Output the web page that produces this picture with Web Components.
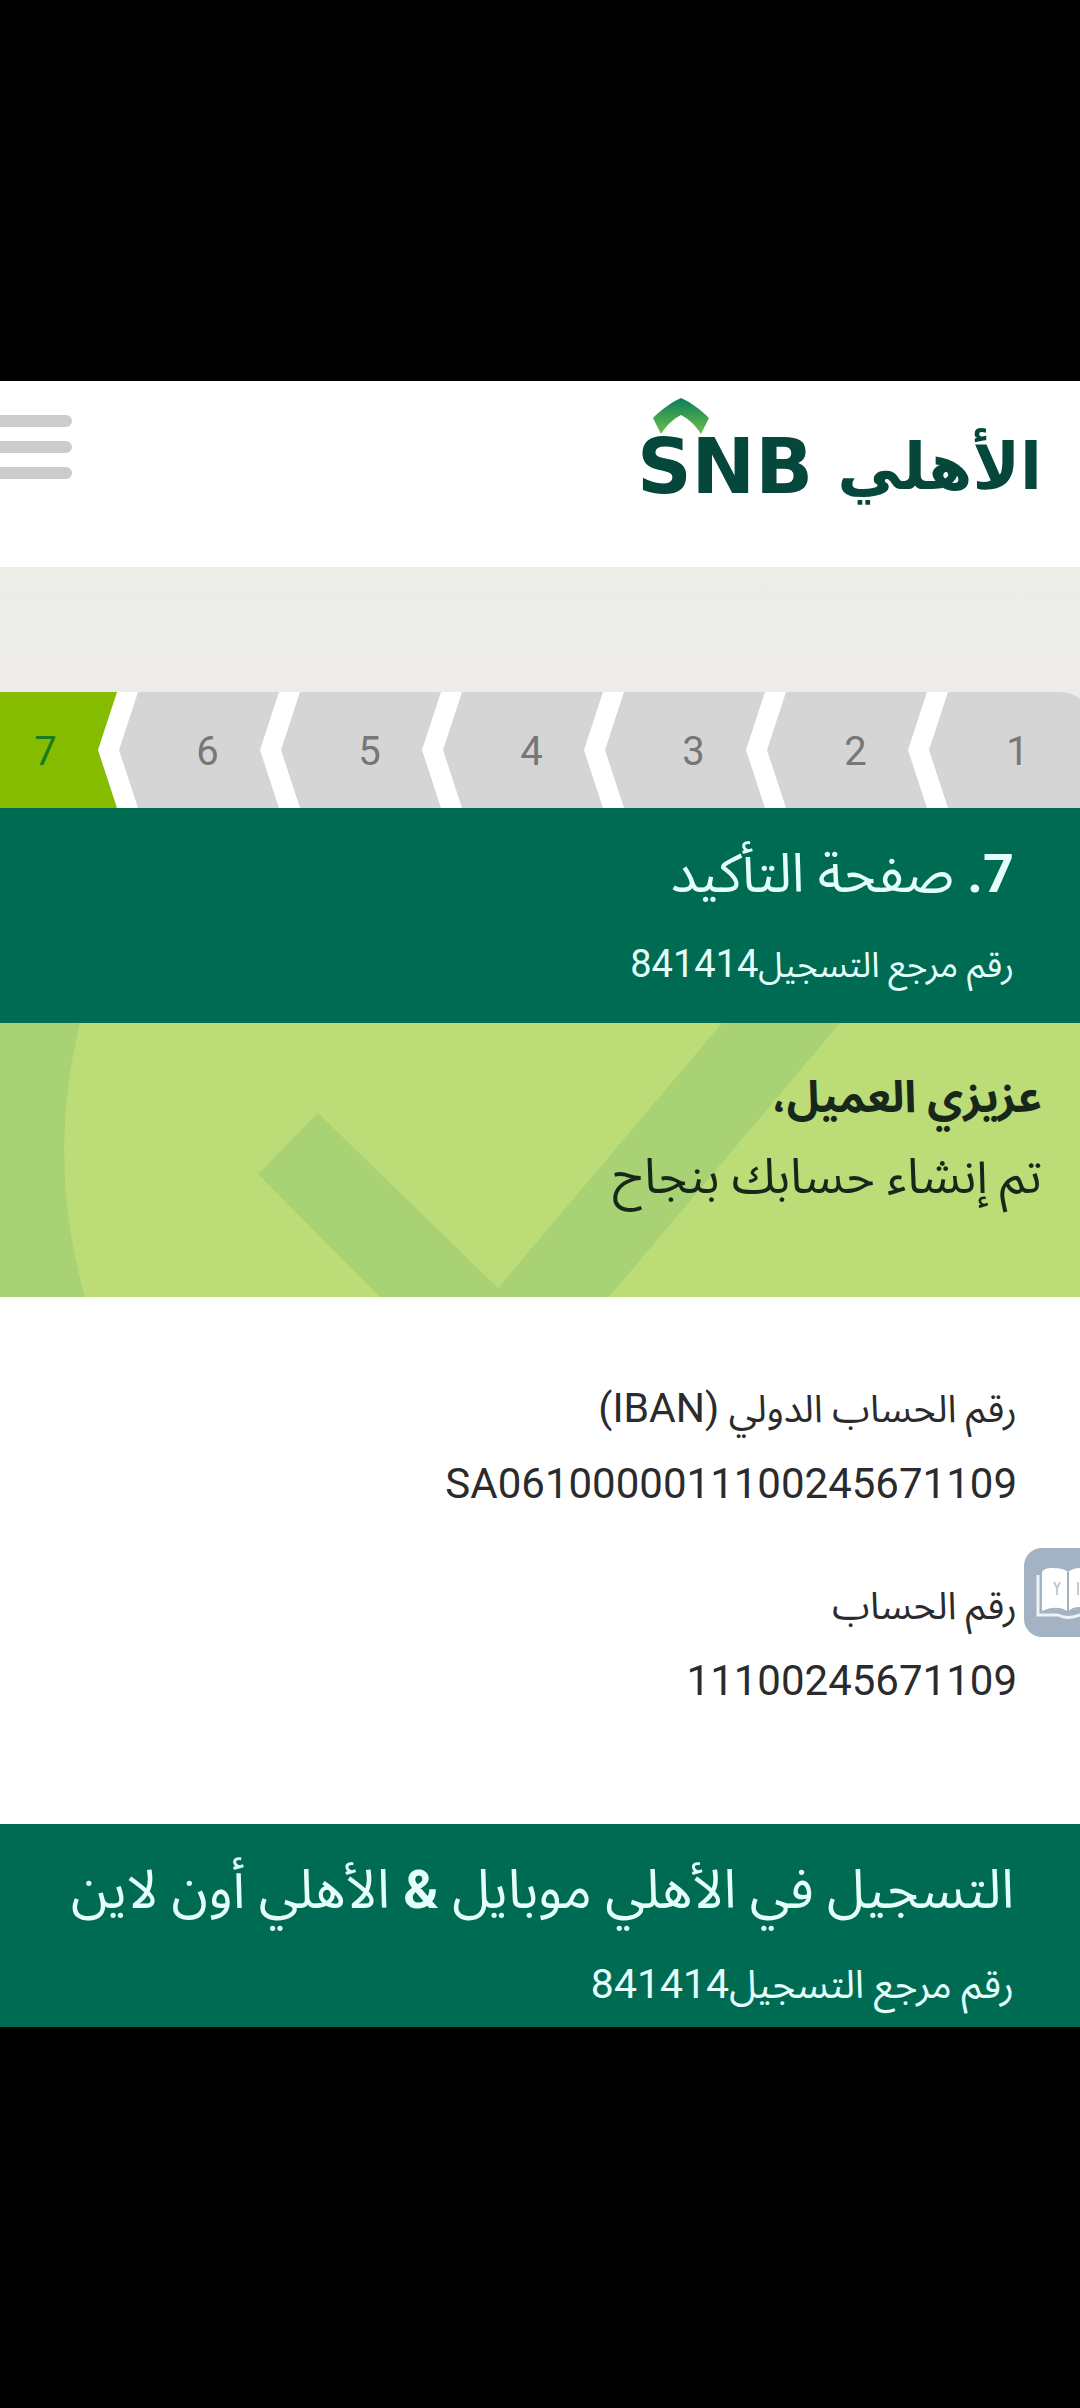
<!DOCTYPE html>
<html lang="ar" dir="rtl">
<head>
<meta charset="utf-8">
<meta name="viewport" content="width=device-width, initial-scale=1">
<title>صفحة التأكيد</title>
<style>
body{margin:0;background:#000;font-family:Roboto,"Noto Sans","Noto Sans Arabic","DejaVu Sans",sans-serif;color:#2b2b2e}
.latin{font-size:41px}
</style>
</head>
<body>
<snb-page>
  <snb-header></snb-header>
  <snb-steps count="7" current="7"></snb-steps>
  <snb-section-title><span slot="title"><b>7.</b> صفحة التأكيد</span><span slot="label">رقم مرجع التسجيل</span><span slot="number">841414</span></snb-section-title>
  <snb-banner><span slot="title">عزيزي العميل،</span><span slot="text">تم إنشاء حسابك بنجاح</span></snb-banner>
  <snb-accounts>
    <snb-field><span slot="label">رقم الحساب الدولي <span class="latin">(IBAN)</span></span><span slot="value">SA0610000011100245671109</span></snb-field>
    <snb-field><span slot="label">رقم الحساب</span><span slot="value">11100245671109</span></snb-field>
    <snb-guide slot="aside"></snb-guide>
  </snb-accounts>
  <snb-section-title class="compact"><span slot="title">التسجيل في الأهلي موبايل <b>&amp;</b> الأهلي أون لاين</span><span slot="label">رقم مرجع التسجيل</span><span slot="number">841414</span></snb-section-title>
</snb-page>
<script>
const define = (name, html) => customElements.define(name, class extends HTMLElement {
  constructor(){ super(); this.attachShadow({mode:'open'}).innerHTML = html; }
});

define('snb-page', `<style>
:host{display:block;padding-block:381px;box-sizing:border-box;min-height:100vh;overflow:hidden}
main{background:#fff}
</style><main><slot></slot></main>`);

define('snb-header', `<style>
:host{display:block}
header{display:flex;justify-content:space-between;align-items:flex-start;height:186px;background:#fff}
.logo{display:flex;align-items:flex-end;gap:24px;margin:17px 38px 0 0;color:#05473a;text-decoration:none}
.mark{display:flex;flex-direction:column;direction:ltr}
.mark svg{width:56px;height:36px;margin-left:16px}
.mark b{font:bold 76px/66px "DejaVu Sans",sans-serif}
.ar{font:bold 64px/66px "DejaVu Sans",sans-serif}
button{display:flex;flex-direction:column;gap:14px;border:0;background:none;padding:34px 0 0;width:72px}
i{display:block;height:12px;background:#ccc;border-radius:0 6px 6px 0}
.band{height:125px;background:linear-gradient(#ebede7,#eeecea)}
</style><header>
<a class="logo" href="#"><span class="ar">الأهلي</span><span class="mark">
<svg viewBox="0 0 56 36" aria-hidden="true"><defs><linearGradient id="g" x1="0" y1="0" x2="0" y2="1"><stop offset="0" stop-color="#0b7c5c"/><stop offset="1" stop-color="#6cc04a"/></linearGradient></defs>
<path fill="url(#g)" d="M0 20C8 12 17 5 28 0C39 5 48 12 56 20L48 36C43 28 36 21 28 17C20 21 13 28 8 36Z"/></svg>
<b>SNB</b></span></a>
<button type="button" aria-label="القائمة"><i></i><i></i><i></i></button>
</header><div class="band"></div>`);

customElements.define('snb-steps', class extends HTMLElement {
  constructor(){
    super();
    const n = +this.getAttribute('count'), cur = +this.getAttribute('current');
    let items = '';
    for (let i = 1; i <= n; i++) items += `<li${i === cur ? ' class="on" aria-current="step"' : ''}>${i}</li>`;
    this.attachShadow({mode:'open'}).innerHTML = `<style>
:host{display:block;overflow:hidden;background:linear-gradient(#eeecea 50%,#fff 50%)}
ol{display:grid;grid-auto-flow:column;grid-auto-columns:15%;list-style:none;margin:0 -11px 0 0;padding:0;width:100%;height:116px;background:#fff;border-radius:0 30px 0 0}
li{display:flex;align-items:center;justify-content:center;padding:4px 0 0 15px;background:#d5d5d5;color:#777;font-size:40px;line-height:48px;clip-path:polygon(19px 0,calc(100% - 2px) 0,calc(100% - 21px) 50%,calc(100% - 2px) 100%,19px 100%,0 50%)}
li:first-child{clip-path:polygon(19px 0,100% 0,100% 100%,19px 100%,0 50%);border-radius:0 30px 0 0}
.on{background:#86bc00;color:#1b7a1d}
</style><ol>${items}</ol>`;
  }
});

define('snb-section-title', `<style>
:host{display:block;background:#006b53;color:#e4fffa;padding:24px 66px 0;height:191px}
h2{margin:0;font-size:54px;line-height:84px;font-weight:400;white-space:nowrap}
p{margin:10px 0 0;font-size:35px;line-height:76px;white-space:nowrap}
.num{font-size:38px}
:host(.compact){height:179px}
:host(.compact) p{margin-top:14px;font-size:39px}
:host(.compact) .num{font-size:41px}
</style><h2><slot name="title"></slot></h2><p><slot name="label"></slot><span class="num"><slot name="number"></slot></span></p>`);

define('snb-banner', `<style>
:host{display:grid;height:274px;background:#bcdc78;color:#17281a}
svg,div{grid-area:1/1}
svg{width:100%;height:274px}
div{padding:34px 38px 0}
h3{margin:0;font-size:44px;line-height:80px}
p{margin:0;font-size:49px;line-height:80px}
</style><svg viewBox="0 0 1080 274" preserveAspectRatio="none" aria-hidden="true"><g fill="#a8d274">
<path d="M0 0H80Q46 140 85 274H0Z"/><path d="M258 151L318 90L498 265L722 0H840L609 274H380Z"/></g></svg>
<div><h3><slot name="title"></slot></h3><p><slot name="text"></slot></p></div>`);

define('snb-accounts', `<style>
:host{display:block;position:relative;background:#fff;height:527px}
section{display:flex;flex-direction:column;gap:47px;padding:74px 63px 0}
</style><section><slot></slot></section><slot name="aside"></slot>`);

define('snb-field', `<style>
:host{display:block}
dl,dd{margin:0}
dt{font-size:38px;line-height:74px}
dd{font-size:42px;line-height:76px}
</style><dl><dt><slot name="label"></slot></dt><dd><slot name="value"></slot></dd></dl>`);

define('snb-guide', `<style>
:host{position:absolute;right:0;top:251px}
button{display:block;width:56px;height:89px;padding:0;border:0;border-radius:18px 0 0 18px;background:#a3b3c3;overflow:hidden}
svg{display:block;width:56px;height:89px}
</style><button type="button" aria-label="الدليل"><svg viewBox="0 0 56 89" aria-hidden="true">
<path d="M14 27V67H34Q44 72 56 67" fill="none" stroke="#edf3f8" stroke-width="3"/>
<path d="M18 24Q20 20 28 20Q40 20 44 24Q49 20 56 20V61Q48 61 44 65Q34 59 18 64Z" fill="#fff"/>
<path d="M18 64Q34 57 44 65Q48 60 56 60" fill="none" stroke="#a3b3c3" stroke-width="2"/>
<path d="M44 24V65" stroke="#a5afb8" stroke-width="2"/>
<path d="M30 34L33 40L36 34M33 40V47M54 34V47" fill="none" stroke="#c3cbd2" stroke-width="2"/>
</svg></button>`);
</script>
</body>
</html>
